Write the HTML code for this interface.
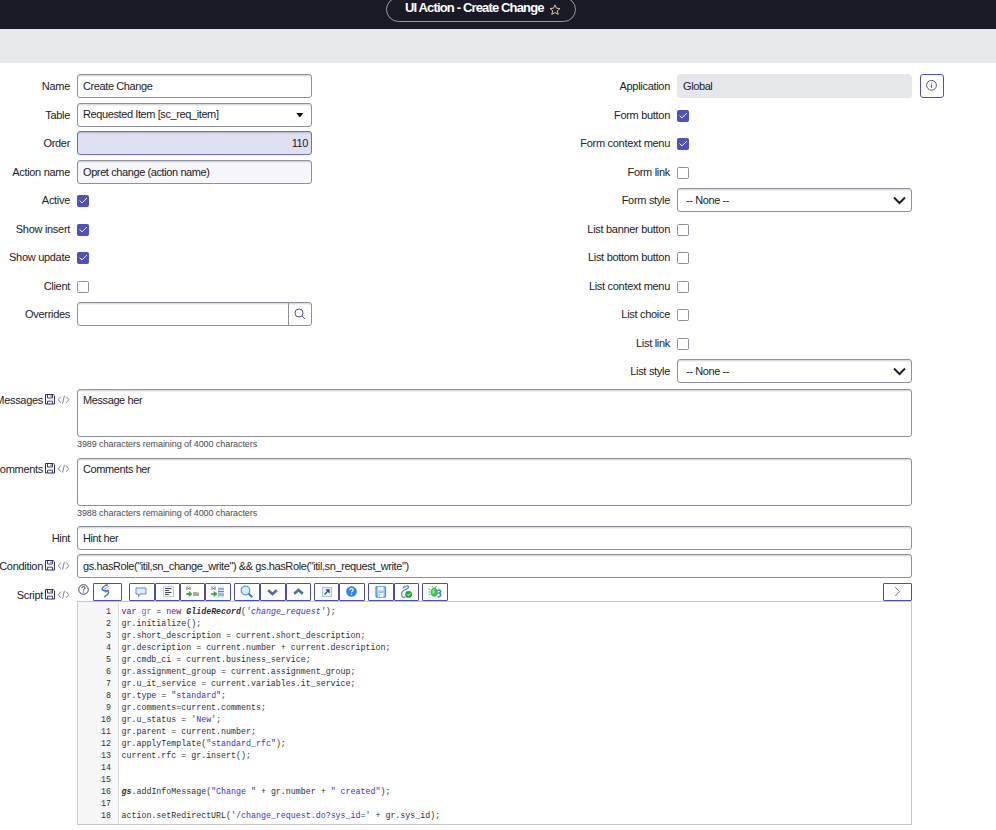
<!DOCTYPE html>
<html><head><meta charset="utf-8">
<style>
*{box-sizing:border-box}
html,body{margin:0;padding:0;width:996px;height:830px;overflow:hidden;background:#fff;font-family:"Liberation Sans",sans-serif;color:#2e2e33}
.abs{position:absolute}
#hdr{position:absolute;left:0;top:0;width:996px;height:29px;background:#1a1a27}
#pill{position:absolute;left:386px;top:-3px;width:190px;height:25px;border:1px solid #9a9aa2;border-radius:13px}
#title{position:absolute;left:405px;top:0px;font-size:13px;font-weight:bold;color:#fff;letter-spacing:-0.85px;white-space:nowrap}
#bar{position:absolute;left:0;top:29px;width:996px;height:34px;background:#e8e9ed}
.lbl{position:absolute;font-size:11px;letter-spacing:-0.3px;color:#222226;text-align:right;white-space:nowrap;line-height:13px}
.inp{position:absolute;height:24px;border:1px solid #8c919c;border-radius:3px;background:#fff;font-size:11px;letter-spacing:-0.4px;color:#222226;padding:0 0 0 5px;line-height:22px;white-space:nowrap;overflow:hidden;box-shadow:inset 0 1px 0 rgba(0,0,0,0.09),inset 0 2px 0 rgba(0,0,0,0.055)}
.cb{position:absolute;width:12px;height:12px;border:1px solid #8c919d;border-radius:1.5px;background:#fff}
.cb.on{background:#4f52bd;border-color:#4f52bd}
.cb.on svg{position:absolute;left:1px;top:1px}
.sel{position:absolute;height:24px;border:1px solid #8c919c;border-radius:3px;background:#fff;box-shadow:inset 0 1px 0 rgba(0,0,0,0.09),inset 0 2px 0 rgba(0,0,0,0.055);font-size:11px;letter-spacing:-0.4px;color:#222226;padding-left:8px;line-height:22px}
.small{position:absolute;font-size:9px;letter-spacing:-0.08px;color:#4a4a50;white-space:nowrap}
.ta{position:absolute;border:1px solid #8c919c;border-radius:3px;background:#fff;font-size:11px;letter-spacing:-0.4px;color:#222226;padding:4px 0 0 5px;line-height:13px;box-shadow:inset 0 1px 0 rgba(0,0,0,0.09),inset 0 2px 0 rgba(0,0,0,0.055)}
#code{position:absolute;left:77px;top:601px;width:835px;height:224px;border:1px solid #c8c8c8;background:#fff;overflow:hidden}
#gutter{position:absolute;left:0;top:0;width:41px;height:100%;background:#f7f7f7;border-right:1px solid #ddd}
#nums{position:absolute;left:0;top:4px;width:33px;margin:0;text-align:right;font-family:"Liberation Mono",monospace;font-size:8.3px;line-height:12px;color:#333}
#src{position:absolute;left:43.5px;top:4px;margin:0;font-family:"Liberation Mono",monospace;font-size:8.3px;line-height:12px;color:#2e2e33}
.kw{color:#770088}.df{color:#6a5ce0}.st{color:#3434c8}
.tb{position:absolute;top:583px;height:18px;border:1px solid #4a4cb8;border-radius:1px;background:#fff}
</style></head><body>
<div id="hdr"></div>
<div id="pill"></div>
<div id="title">UI Action - Create Change</div>
<div id="bar"></div>

<!-- left labels -->
<div class="lbl" style="right:926px;top:80px">Name</div>
<div class="lbl" style="right:926px;top:109px">Table</div>
<div class="lbl" style="right:926px;top:137px">Order</div>
<div class="lbl" style="right:926px;top:166px">Action name</div>
<div class="lbl" style="right:926px;top:194px">Active</div>
<div class="lbl" style="right:926px;top:223px">Show insert</div>
<div class="lbl" style="right:926px;top:251px">Show update</div>
<div class="lbl" style="right:926px;top:280px">Client</div>
<div class="lbl" style="right:926px;top:308px">Overrides</div>

<div class="inp" style="left:77px;top:74px;width:235px">Create Change</div>
<div class="inp" style="left:77px;top:103px;width:235px;line-height:20px">Requested Item [sc_req_item]</div>
<div class="inp" style="left:77px;top:131px;width:235px;background:#e0e0f3;border-color:#6b6fc4;text-align:right;padding-right:3px">110</div>
<div class="inp" style="left:77px;top:160px;width:235px;background:#f6f6fb">Opret change (action name)</div>
<div class="cb on" style="left:77px;top:195px"><svg width="10" height="10" viewBox="0 0 10 10"><path d="M0.6 3.6 L3 5.9 L7.9 1" fill="none" stroke="#fff" stroke-width="1"/></svg></div>
<div class="cb on" style="left:77px;top:224px"><svg width="10" height="10" viewBox="0 0 10 10"><path d="M0.6 3.6 L3 5.9 L7.9 1" fill="none" stroke="#fff" stroke-width="1"/></svg></div>
<div class="cb on" style="left:77px;top:252px"><svg width="10" height="10" viewBox="0 0 10 10"><path d="M0.6 3.6 L3 5.9 L7.9 1" fill="none" stroke="#fff" stroke-width="1"/></svg></div>
<div class="cb" style="left:77px;top:281px"></div>
<div class="inp" style="left:77px;top:302px;width:235px"></div>

<!-- right labels -->
<div class="lbl" style="right:326px;top:80px">Application</div>
<div class="lbl" style="right:326px;top:109px">Form button</div>
<div class="lbl" style="right:326px;top:137px">Form context menu</div>
<div class="lbl" style="right:326px;top:166px">Form link</div>
<div class="lbl" style="right:326px;top:194px">Form style</div>
<div class="lbl" style="right:326px;top:223px">List banner button</div>
<div class="lbl" style="right:326px;top:251px">List bottom button</div>
<div class="lbl" style="right:326px;top:280px">List context menu</div>
<div class="lbl" style="right:326px;top:308px">List choice</div>
<div class="lbl" style="right:326px;top:337px">List link</div>
<div class="lbl" style="right:326px;top:365px">List style</div>

<div class="inp" style="left:677px;top:74px;width:235px;background:#e6e7ea;border-color:#e6e7ea;box-shadow:none">Global</div>
<div class="cb on" style="left:677px;top:110px"><svg width="10" height="10" viewBox="0 0 10 10"><path d="M0.6 3.6 L3 5.9 L7.9 1" fill="none" stroke="#fff" stroke-width="1"/></svg></div>
<div class="cb on" style="left:677px;top:138px"><svg width="10" height="10" viewBox="0 0 10 10"><path d="M0.6 3.6 L3 5.9 L7.9 1" fill="none" stroke="#fff" stroke-width="1"/></svg></div>
<div class="cb" style="left:677px;top:167px"></div>
<div class="sel" style="left:677px;top:188px;width:235px">-- None --</div>
<div class="cb" style="left:677px;top:224px"></div>
<div class="cb" style="left:677px;top:252px"></div>
<div class="cb" style="left:677px;top:281px"></div>
<div class="cb" style="left:677px;top:309px"></div>
<div class="cb" style="left:677px;top:338px"></div>
<div class="sel" style="left:677px;top:359px;width:235px">-- None --</div>

<!-- star -->
<svg class="abs" style="left:549px;top:4px" width="12" height="12" viewBox="0 0 12 12"><path d="M6 0.9 L7.5 4.2 L11 4.5 L8.3 6.8 L9.2 10.4 L6 8.5 L2.8 10.4 L3.7 6.8 L1 4.5 L4.5 4.2 Z" fill="none" stroke="#d9c79a" stroke-width="1" stroke-linejoin="round"/></svg>
<!-- table select arrow -->
<svg class="abs" style="left:296px;top:113px" width="8" height="5" viewBox="0 0 8 5"><path d="M0.3 0 H7.3 L3.8 4.5 Z" fill="#111"/></svg>
<!-- form style chevrons -->
<svg class="abs" style="left:893px;top:196px" width="13" height="9" viewBox="0 0 13 9"><path d="M1 1.5 L6.5 7 L12 1.5" fill="none" stroke="#1e1e2a" stroke-width="2"/></svg>
<svg class="abs" style="left:893px;top:367px" width="13" height="9" viewBox="0 0 13 9"><path d="M1 1.5 L6.5 7 L12 1.5" fill="none" stroke="#1e1e2a" stroke-width="2"/></svg>
<!-- overrides divider + search -->
<div class="abs" style="left:288px;top:302px;width:1px;height:24px;background:#8c919c"></div>
<svg class="abs" style="left:294px;top:308px" width="13" height="13" viewBox="0 0 13 13"><circle cx="5" cy="5" r="4" fill="none" stroke="#4f52bd" stroke-width="1"/><path d="M8 8 L11 11" stroke="#4f52bd" stroke-width="1"/></svg>
<!-- info button -->
<div class="abs" style="left:920px;top:74px;width:24px;height:24px;border:1px solid #4f52bd;border-radius:3px;background:#fff"></div>
<svg class="abs" style="left:926px;top:80px" width="12" height="12" viewBox="0 0 12 12"><circle cx="5.5" cy="5.3" r="4.9" fill="none" stroke="#4f52bd" stroke-width="1"/><path d="M5.5 4.5 V8" stroke="#4f52bd" stroke-width="0.9"/><circle cx="5.5" cy="3" r="0.55" fill="#4f52bd"/></svg>
<!-- label icons -->
<svg class="abs" style="left:45px;top:394px" width="11" height="11" viewBox="0 0 11 11"><path d="M0.5 0.5 H8.2 L9.5 1.8 V10 H0.5 Z" fill="none" stroke="#2e2c70" stroke-width="1"/><path d="M2.5 0.5 V4 H7.5 V0.5 M6 1.3 V3" fill="none" stroke="#2e2c70" stroke-width="0.9"/><path d="M2.5 10 V7.2 H7.5 V10" fill="none" stroke="#2e2c70" stroke-width="0.9"/></svg><svg class="abs" style="left:57px;top:395px" width="13" height="10" viewBox="0 0 13 10"><path d="M3.8 1.6 L1.2 4.7 L3.8 7.8 M9.2 1.6 L11.8 4.7 L9.2 7.8 M7.4 0.8 L5.6 8.6" fill="none" stroke="#6f6794" stroke-width="0.85"/></svg>
<svg class="abs" style="left:45px;top:463px" width="11" height="11" viewBox="0 0 11 11"><path d="M0.5 0.5 H8.2 L9.5 1.8 V10 H0.5 Z" fill="none" stroke="#2e2c70" stroke-width="1"/><path d="M2.5 0.5 V4 H7.5 V0.5 M6 1.3 V3" fill="none" stroke="#2e2c70" stroke-width="0.9"/><path d="M2.5 10 V7.2 H7.5 V10" fill="none" stroke="#2e2c70" stroke-width="0.9"/></svg><svg class="abs" style="left:57px;top:464px" width="13" height="10" viewBox="0 0 13 10"><path d="M3.8 1.6 L1.2 4.7 L3.8 7.8 M9.2 1.6 L11.8 4.7 L9.2 7.8 M7.4 0.8 L5.6 8.6" fill="none" stroke="#6f6794" stroke-width="0.85"/></svg>
<svg class="abs" style="left:45px;top:560px" width="11" height="11" viewBox="0 0 11 11"><path d="M0.5 0.5 H8.2 L9.5 1.8 V10 H0.5 Z" fill="none" stroke="#2e2c70" stroke-width="1"/><path d="M2.5 0.5 V4 H7.5 V0.5 M6 1.3 V3" fill="none" stroke="#2e2c70" stroke-width="0.9"/><path d="M2.5 10 V7.2 H7.5 V10" fill="none" stroke="#2e2c70" stroke-width="0.9"/></svg><svg class="abs" style="left:57px;top:561px" width="13" height="10" viewBox="0 0 13 10"><path d="M3.8 1.6 L1.2 4.7 L3.8 7.8 M9.2 1.6 L11.8 4.7 L9.2 7.8 M7.4 0.8 L5.6 8.6" fill="none" stroke="#6f6794" stroke-width="0.85"/></svg>
<svg class="abs" style="left:45px;top:589px" width="11" height="11" viewBox="0 0 11 11"><path d="M0.5 0.5 H8.2 L9.5 1.8 V10 H0.5 Z" fill="none" stroke="#2e2c70" stroke-width="1"/><path d="M2.5 0.5 V4 H7.5 V0.5 M6 1.3 V3" fill="none" stroke="#2e2c70" stroke-width="0.9"/><path d="M2.5 10 V7.2 H7.5 V10" fill="none" stroke="#2e2c70" stroke-width="0.9"/></svg><svg class="abs" style="left:57px;top:590px" width="13" height="10" viewBox="0 0 13 10"><path d="M3.8 1.6 L1.2 4.7 L3.8 7.8 M9.2 1.6 L11.8 4.7 L9.2 7.8 M7.4 0.8 L5.6 8.6" fill="none" stroke="#6f6794" stroke-width="0.85"/></svg>

<!-- lower section -->
<div class="lbl" style="right:953px;top:394px">Messages</div>
<div class="lbl" style="right:953px;top:463px">Comments</div>
<div class="lbl" style="right:926px;top:532px">Hint</div>
<div class="lbl" style="right:953px;top:560px">Condition</div>
<div class="lbl" style="right:953px;top:589px">Script</div>

<div class="ta" style="left:77px;top:389px;width:835px;height:48px">Message her</div>
<div class="small" style="left:77px;top:439px">3989 characters remaining of 4000 characters</div>
<div class="ta" style="left:77px;top:458px;width:835px;height:48px">Comments her</div>
<div class="small" style="left:77px;top:508px">3988 characters remaining of 4000 characters</div>
<div class="inp" style="left:77px;top:526px;width:835px">Hint her</div>
<div class="inp" style="left:77px;top:554px;width:835px">gs.hasRole("itil,sn_change_write") &amp;&amp; gs.hasRole("itil,sn_request_write")</div>

<!-- toolbar -->
<div class="tb" style="left:93px;width:29px"></div>
<div class="tb" style="left:129px;width:26px"></div>
<div class="tb" style="left:155px;width:25px"></div>
<div class="tb" style="left:180px;width:25px"></div>
<div class="tb" style="left:205px;width:26px"></div>
<div class="tb" style="left:234px;width:26px"></div>
<div class="tb" style="left:260px;width:26px"></div>
<div class="tb" style="left:286px;width:25px"></div>
<div class="tb" style="left:314px;width:25px"></div>
<div class="tb" style="left:339px;width:26px"></div>
<div class="tb" style="left:368px;width:26px"></div>
<div class="tb" style="left:394px;width:25px"></div>
<div class="tb" style="left:422px;width:26px"></div>
<div class="tb" style="left:883px;width:29px"></div>

<svg class="abs" style="left:78px;top:584px" width="11" height="11" viewBox="0 0 11 11"><circle cx="5.5" cy="5.5" r="4.8" fill="none" stroke="#2a2a4a" stroke-width="0.9"/><path d="M3.9 4.2 Q3.9 2.6 5.5 2.6 Q7.1 2.6 7.1 4 Q7.1 5 5.6 5.6 V6.6" fill="none" stroke="#2a2a4a" stroke-width="0.9"/><circle cx="5.6" cy="8.1" r="0.55" fill="#2a2a4a"/></svg>
<svg class="abs" style="left:100px;top:584px" width="12" height="14" viewBox="0 0 12 14"><path d="M7.8 0.8 C5.5 1.2 2.5 3 2.2 5 C2 6.3 4 6.5 6 6.8 C8.5 7.2 9.5 8.5 7.5 10.5 L4 13" fill="none" stroke="#3a70e0" stroke-width="1.5"/><path d="M8.5 2.5 L4 5.5" stroke="#6aa0f0" stroke-width="1"/><path d="M4.5 7 L6.5 8.2" stroke="#35b84a" stroke-width="1.5"/><path d="M7 6 L9 6.8" stroke="#e5483a" stroke-width="1.2"/></svg>
<svg class="abs" style="left:135px;top:587px" width="12" height="11" viewBox="0 0 12 11"><path d="M1 1 H11 V7 H5 L3.5 9.5 V7 H1 Z" fill="#e4eefa" stroke="#5b8fd6" stroke-width="1"/></svg>
<svg class="abs" style="left:163px;top:586px" width="11" height="11" viewBox="0 0 11 11"><rect x="0.5" y="0.5" width="10" height="10" fill="#f4f8ff" stroke="#b9d0f0" stroke-width="1"/><path d="M2 2.5 H8.5 M2 4.5 H6 M2 6.5 H8.5 M2 8.5 H6" stroke="#444" stroke-width="1.2"/></svg>
<svg class="abs" style="left:186px;top:586px" width="14" height="12" viewBox="0 0 14 12"><path d="M1 0.5 V4 M2 2.5 H3 M4 0.5 V4" stroke="#555" stroke-width="0.9"/><path d="M0.5 7.5 H3 V5.5 L6 8 L3 10.5 V8.5 H0.5 Z" fill="#2fb53a" stroke="#1f9a2a" stroke-width="0.6"/><path d="M8 6 V10 M10 6 V10 M12 6.5 V10" stroke="#555" stroke-width="1"/></svg>
<svg class="abs" style="left:211px;top:586px" width="14" height="12" viewBox="0 0 14 12"><path d="M1 0.5 V4 M2 2.5 H3 M4 0.5 V4" stroke="#555" stroke-width="0.9"/><path d="M0.5 7.5 H3 V5.5 L6 8 L3 10.5 V8.5 H0.5 Z" fill="#2fb53a" stroke="#1f9a2a" stroke-width="0.6"/><rect x="7" y="0.5" width="6" height="11" fill="#cfe0f7"/><path d="M7 3 H13 M7 5.5 H13 M8 7 V10 M10 7 V10 M12 7 V10" stroke="#5a7fc0" stroke-width="0.9"/></svg>
<svg class="abs" style="left:240px;top:585px" width="14" height="14" viewBox="0 0 14 14"><circle cx="5.5" cy="5.5" r="4.3" fill="#dbeafc" stroke="#5a9be6" stroke-width="1.3"/><path d="M8.5 8.5 L12.3 12.3" stroke="#4a78b8" stroke-width="2"/></svg>
<svg class="abs" style="left:267px;top:589px" width="11" height="7" viewBox="0 0 11 7"><path d="M1.2 1.2 L5.5 5 L9.8 1.2" fill="none" stroke="#3d6db5" stroke-width="2.6"/><path d="M1.6 1.4 L5.5 4.8 L9.4 1.4" fill="none" stroke="#6a7080" stroke-width="1"/></svg>
<svg class="abs" style="left:293px;top:588px" width="11" height="7" viewBox="0 0 11 7"><path d="M1.2 5.8 L5.5 2 L9.8 5.8" fill="none" stroke="#3d6db5" stroke-width="2.6"/><path d="M1.6 5.6 L5.5 2.2 L9.4 5.6" fill="none" stroke="#6a7080" stroke-width="1"/></svg>
<svg class="abs" style="left:322px;top:587px" width="10" height="10" viewBox="0 0 10 10"><rect x="0.5" y="0.5" width="9" height="9" fill="#e6effb" stroke="#a9c4ea" stroke-width="1"/><path d="M2.5 7.5 L7 3 M4 3 H7 V6" fill="none" stroke="#2d4f80" stroke-width="1.3"/></svg>
<svg class="abs" style="left:346px;top:586px" width="11" height="11" viewBox="0 0 11 11"><circle cx="5.5" cy="5.5" r="5.3" fill="#2f86e8"/><path d="M3.9 4.2 Q3.9 2.5 5.5 2.5 Q7.2 2.5 7.2 4 Q7.2 5 5.6 5.7 V6.6" fill="none" stroke="#fff" stroke-width="1.1"/><circle cx="5.6" cy="8.3" r="0.7" fill="#fff"/></svg>
<svg class="abs" style="left:375px;top:586px" width="12" height="12" viewBox="0 0 12 12"><rect x="1" y="0.8" width="9.5" height="10.2" rx="0.8" fill="#9cc8f5" stroke="#4b95e6" stroke-width="1.3"/><rect x="3" y="1" width="5.5" height="3.6" fill="#eef6fe"/><rect x="3" y="7" width="5.5" height="4" fill="#f4f9ff"/><path d="M4 7.5 V10.5" stroke="#4b95e6" stroke-width="0.8"/></svg>
<svg class="abs" style="left:400px;top:585px" width="13" height="14" viewBox="0 0 13 14"><path d="M3 3.5 C3 1.5 7.5 0 8.5 1.8 C9 3 6 4.5 4.5 5 C2 6 1 8.5 2 11 C2.6 12.4 4.5 12.6 5.5 12" fill="none" stroke="#3f7fe8" stroke-width="1.2"/><path d="M4 2.8 L7.5 1.5" stroke="#9cc2f5" stroke-width="1"/><circle cx="8.6" cy="9.4" r="3.4" fill="#22a336"/><path d="M7.1 9.3 L8.4 10.6 L10.2 8.3" fill="none" stroke="#fff" stroke-width="1"/></svg>
<svg class="abs" style="left:428px;top:585px" width="15" height="14" viewBox="0 0 15 14"><path d="M0.5 4 L2.5 5 M0.5 10 L2.5 9 M0.3 7 H2.5 M4 1 L5 2.5 M8.5 1 L7.5 2.5 M10 4.5 L11.5 3.8" stroke="#3cbf4a" stroke-width="0.9"/><ellipse cx="6.3" cy="7.2" rx="3.6" ry="4.6" fill="#35c24a"/><ellipse cx="5.5" cy="6.5" rx="1.3" ry="2.5" fill="#8fe09a"/><path d="M9.5 5.5 C12.5 4.5 13.8 6.5 11.3 8 C13.8 9 12.8 12.5 9.5 11.5" fill="none" stroke="#3f7fe8" stroke-width="1.5"/></svg>
<svg class="abs" style="left:894px;top:586px" width="8" height="11" viewBox="0 0 8 11"><path d="M1.2 1 L5.6 5.5 L1.2 10" fill="none" stroke="#4d42a0" stroke-width="0.8"/></svg>

<div id="code">
<div id="gutter"></div>
<pre id="nums">1
2
3
4
5
6
7
8
9
10
11
12
13
14
15
16
17
18</pre>
<pre id="src"><span class="kw">var</span> <span class="df">gr</span> = <span class="kw">new</span> <b><i>GlideRecord</i></b>(<i class="st">'change_request'</i>);
gr.initialize();
gr.short_description = current.short_description;
gr.description = current.number + current.description;
gr.cmdb_ci = current.business_service;
gr.assignment_group = current.assignment_group;
gr.u_it_service = current.variables.it_service;
gr.type = <span class="st">"standard"</span>;
gr.comments=current.comments;
gr.u_status = <span class="st">'New'</span>;
gr.parent = current.number;
gr.applyTemplate(<span class="st">"standard_rfc"</span>);
current.rfc = gr.insert();


<b><i>gs</i></b>.addInfoMessage(<span class="st">"Change "</span> + gr.number + <span class="st">" created"</span>);

action.setRedirectURL(<span class="st">'/change_request.do?sys_id='</span> + gr.sys_id);</pre>
</div>

</body></html>
